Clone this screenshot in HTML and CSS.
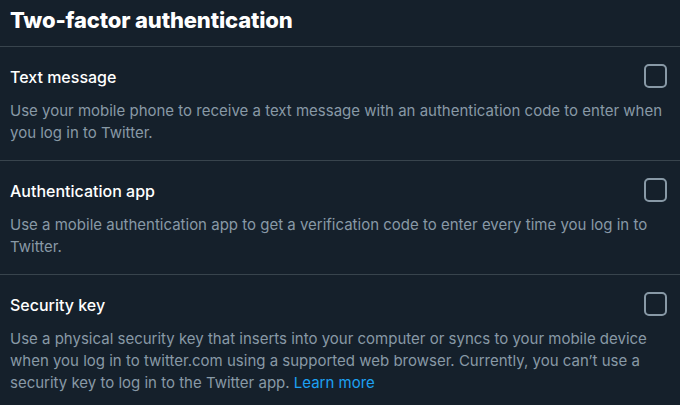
FILE: index.html
```html
<!DOCTYPE html>
<html lang="en">
<head>
<meta charset="utf-8">
<title>Two-factor authentication</title>
<link rel="stylesheet" href="styles.css">
</head>
<body>
<main class="panel">
  <header class="panel-header">
    <h1 class="panel-title">Two-factor authentication</h1>
  </header>
  <section class="option">
    <div class="option-row">
      <span class="option-title">Text message</span>
      <span class="checkbox"></span>
    </div>
    <p class="option-desc">Use your mobile phone to receive a text message with an authentication code to enter when you log in to Twitter.</p>
  </section>
  <section class="option">
    <div class="option-row">
      <span class="option-title">Authentication app</span>
      <span class="checkbox"></span>
    </div>
    <p class="option-desc">Use a mobile authentication app to get a verification code to enter every time you log in to Twitter.</p>
  </section>
  <section class="option option-last">
    <div class="option-row">
      <span class="option-title">Security key</span>
      <span class="checkbox"></span>
    </div>
    <p class="option-desc">Use a physical security key that inserts into your computer or syncs to your mobile device when you log in to twitter.com using a supported web browser. Currently, you can’t use a security key to log in to the Twitter app. <a class="link" href="#">Learn more</a></p>
  </section>
</main>
</body>
</html>
```
FILE: styles.css
```css
html, body {
  margin: 0;
  padding: 0;
  background: #15202b;
}
body {
  font-family: Inter, "Noto Sans", "Liberation Sans", sans-serif;
  color: #ffffff;
  width: 680px;
  height: 405px;
  overflow: hidden;
}
.panel-header {
  padding: 6px 10px 12px;
  border-bottom: 1px solid #38444d;
}
.panel-title {
  margin: 0;
  font-size: 22px;
  line-height: 28px;
  font-weight: 800;
  letter-spacing: -0.15px;
}
.option {
  padding: 19px 13px 16px 10px;
  border-bottom: 1px solid #38444d;
}
.option-last {
  border-bottom: none;
}
.option-row {
  display: flex;
  align-items: center;
  justify-content: space-between;
  height: 22px;
}
.option-title {
  font-size: 16px;
  line-height: 22px;
  font-weight: 500;
}
.checkbox {
  width: 19px;
  height: 20px;
  border: 2px solid #8899a6;
  border-radius: 5px;
  box-sizing: content-box;
  margin-top: -3px;
}
.option-desc {
  margin: 12px 0 0;
  font-size: 15px;
  line-height: 22px;
  color: #8899a6;
  padding-right: 1px;
}
.link {
  color: #1da1f2;
  text-decoration: none;
}
```
